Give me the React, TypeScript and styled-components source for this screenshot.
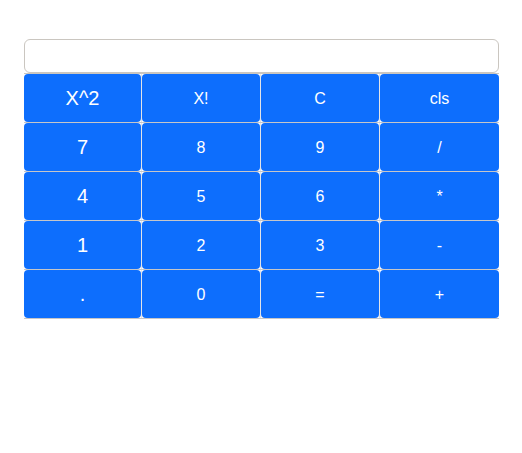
import React, { useState } from "react";
import styled, { createGlobalStyle } from "styled-components";

const GlobalStyle = createGlobalStyle`
  *, *::before, *::after { box-sizing: border-box; }
  body {
    margin: 0;
    background: #fff;
    font-family: "Liberation Sans", Arial, sans-serif;
    font-size: 16px;
    line-height: 24px;
  }
`;

const Calculator = styled.main`
  padding: 39px 23px 24px 24px;
`;

const Display = styled.input`
  display: block;
  width: 100%;
  height: 34px;
  padding: 4px 12px;
  border: 1px solid #cac6c0;
  border-radius: 6px;
  background: #fff;
  color: #212529;
  font: inherit;
  text-align: right;
  outline: none;
`;

const Keypad = styled.div`
  border-top: 1px solid #cac6c0;
`;

const KeyRow = styled.div`
  display: grid;
  grid-template-columns: 117fr 119fr 119fr 120fr;
  border-bottom: 1px solid #c6c6c8;
`;

const KeyCell = styled.div`
  display: flex;
  min-width: 0;

  & + & {
    border-left: 1px solid #e2e4e8;
  }
`;

const Key = styled.button<{ $large: boolean }>`
  flex: 1;
  min-width: 0;
  height: 48px;
  padding: ${({ $large }) => ($large ? "0" : "2px 0 0")};
  border: 0;
  border-radius: 4px;
  background: #0d6efd;
  color: #fff;
  font-family: inherit;
  font-size: ${({ $large }) => ($large ? 20 : 16)}px;
  line-height: 24px;
  cursor: pointer;
`;

const rows = [
  ["X^2", "X!", "C", "cls"],
  ["7", "8", "9", "/"],
  ["4", "5", "6", "*"],
  ["1", "2", "3", "-"],
  [".", "0", "=", "+"],
];

function factorial(n: number): number {
  if (n < 0 || !Number.isInteger(n)) return NaN;
  let result = 1;
  for (let i = 2; i <= n && Number.isFinite(result); i++) result *= i;
  return result;
}

function evaluate(text: string): number {
  const tokens = text.match(/\d*\.?\d+|[-+*/]/g) ?? [];
  const terms: number[] = [];
  let operator = "+";
  for (const token of tokens) {
    if (/^[-+*/]$/.test(token)) {
      operator = token;
      continue;
    }
    const value = Number(token);
    if (operator === "*") terms.push((terms.pop() ?? 0) * value);
    else if (operator === "/") terms.push((terms.pop() ?? 0) / value);
    else terms.push(operator === "-" ? -value : value);
  }
  return terms.reduce((sum, term) => sum + term, 0);
}

export default function App() {
  const [value, setValue] = useState("");

  const press = (key: string) => {
    if (key === "cls") setValue("");
    else if (key === "C") setValue((v) => v.slice(0, -1));
    else if (key === "=") setValue((v) => String(evaluate(v)));
    else if (key === "X^2") setValue((v) => String(evaluate(v) ** 2));
    else if (key === "X!") setValue((v) => String(factorial(evaluate(v))));
    else setValue((v) => v + key);
  };

  return (
    <>
      <GlobalStyle />
      <Calculator>
        <Display
          type="text"
          aria-label="Display"
          value={value}
          onChange={(event) => setValue(event.target.value)}
        />
        <Keypad>
          {rows.map((row) => (
            <KeyRow key={row[0]}>
              {row.map((key, column) => (
                <KeyCell key={key}>
                  <Key type="button" $large={column === 0} onClick={() => press(key)}>
                    {key}
                  </Key>
                </KeyCell>
              ))}
            </KeyRow>
          ))}
        </Keypad>
      </Calculator>
    </>
  );
}
